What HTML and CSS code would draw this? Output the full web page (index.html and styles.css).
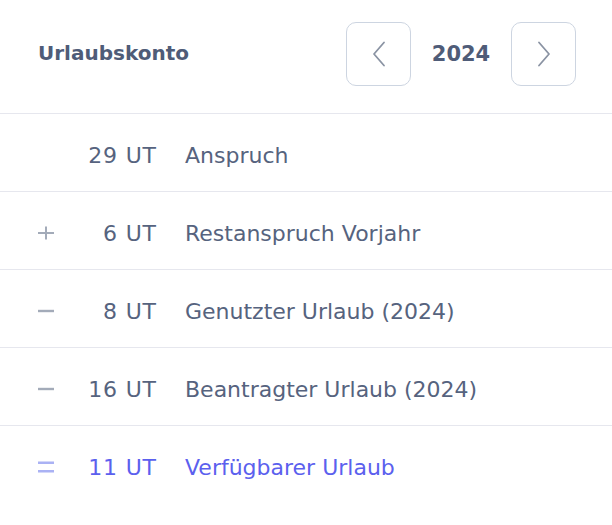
FILE: index.html
```html
<!DOCTYPE html>
<html lang="de">
<head>
<meta charset="utf-8">
<title>Urlaubskonto</title>
<link rel="stylesheet" href="styles.css">
</head>
<body>
<div class="card">
  <div class="header">
    <h2 class="title">Urlaubskonto</h2>
    <div class="year-nav">
      <button class="nav-btn" aria-label="Vorheriges Jahr">
        <svg width="14" height="26" viewBox="0 0 14 26"><polyline points="12,1.5 2,13 12,24.5" fill="none" stroke="#8a93a3" stroke-width="1.8" stroke-linecap="round" stroke-linejoin="round"/></svg>
      </button>
      <span class="year">2024</span>
      <button class="nav-btn" aria-label="Nächstes Jahr">
        <svg width="14" height="26" viewBox="0 0 14 26"><polyline points="2,1.5 12,13 2,24.5" fill="none" stroke="#8a93a3" stroke-width="1.8" stroke-linecap="round" stroke-linejoin="round"/></svg>
      </button>
    </div>
  </div>
  <div class="row">
    <span class="sign"></span>
    <span class="num">29 UT</span>
    <span class="label">Anspruch</span>
  </div>
  <div class="row">
    <span class="sign"><svg width="16" height="16" viewBox="0 0 16 16"><path d="M0 8H16M8 1.5V14.5" stroke="#a3abb9" stroke-width="2"/></svg></span>
    <span class="num">6 UT</span>
    <span class="label">Restanspruch Vorjahr</span>
  </div>
  <div class="row">
    <span class="sign"><svg width="16" height="16" viewBox="0 0 16 16"><path d="M0 8H16" stroke="#a3abb9" stroke-width="2.4"/></svg></span>
    <span class="num">8 UT</span>
    <span class="label">Genutzter Urlaub (2024)</span>
  </div>
  <div class="row">
    <span class="sign"><svg width="16" height="16" viewBox="0 0 16 16"><path d="M0 8H16" stroke="#a3abb9" stroke-width="2.4"/></svg></span>
    <span class="num">16 UT</span>
    <span class="label">Beantragter Urlaub (2024)</span>
  </div>
  <div class="row total">
    <span class="sign"><svg width="16" height="16" viewBox="0 0 16 16"><path d="M0 3.8H16M0 12.2H16" stroke="#aab2f4" stroke-width="2.6"/></svg></span>
    <span class="num">11 UT</span>
    <span class="label">Verfügbarer Urlaub</span>
  </div>
</div>
</body>
</html>
```
FILE: styles.css
```css
* { box-sizing: border-box; }
html, body {
  margin: 0;
  padding: 0;
  background: #ffffff;
}
body {
  font-family: "DejaVu Sans", "Noto Sans", sans-serif;
  color: #56637e;
}
.card {
  width: 612px;
}
.header {
  height: 114px;
  display: flex;
  align-items: flex-start;
  justify-content: space-between;
  padding: 22px 36px 0 38px;
  border-bottom: 1px solid #e6e7ee;
}
.title {
  margin: 17px 0 0 0;
  font-size: 20px;
  font-weight: 700;
  color: #4f5c78;
  line-height: 28px;
}
.year-nav {
  display: flex;
  align-items: center;
}
.nav-btn {
  width: 65px;
  height: 64px;
  border: 1px solid #cdd5e1;
  border-radius: 10px;
  background: #ffffff;
  display: flex;
  align-items: center;
  justify-content: center;
  padding: 0;
}
.year {
  width: 100px;
  text-align: center;
  font-size: 21px;
  font-weight: 700;
  color: #4f5c78;
}
.row {
  height: 78px;
  display: grid;
  grid-template-columns: 18px 100px 1fr;
  align-items: center;
  padding-left: 38px;
  border-bottom: 1px solid #e6e7ee;
  font-size: 22px;
  line-height: 28px;
  padding-top: 6px;
}
.row.total {
  border-bottom: none;
  color: #5b60ee;
}
.sign {
  display: flex;
  align-items: center;
  margin-top: -2px;
}
.num {
  text-align: right;
  letter-spacing: 0.8px;
  margin-right: -0.8px;
}
.label {
  padding-left: 29px;
}
```
